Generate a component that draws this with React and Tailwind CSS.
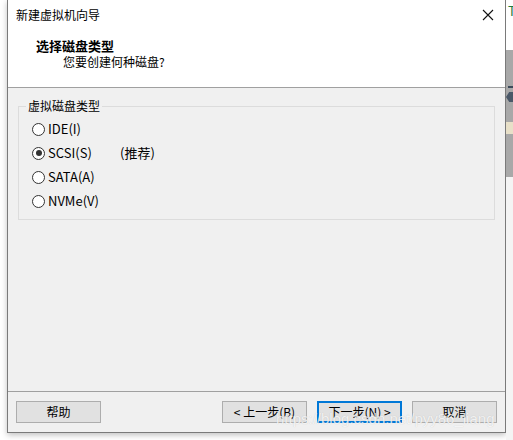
import React from 'react';

const font = { fontFamily: '"Noto Sans CJK SC", "Noto Sans", sans-serif' };

function Radio({ checked, label, extra }) {
  return (
    <div className="flex h-[24px] items-center">
      <span className="flex h-[13px] w-[13px] items-center justify-center rounded-full border border-[#333] bg-white">
        {checked && <span className="h-[6px] w-[6px] rounded-full bg-[#333]" />}
      </span>
      <span className="ml-[3px] w-[72px] text-[13px] text-black">{label}</span>
      {extra && <span className="text-[13px] text-black">{extra}</span>}
    </div>
  );
}

function Btn({ children, primary }) {
  return (
    <button
      className={
        'flex h-[22px] w-[85px] items-center justify-center bg-[#e1e1e1] text-[12px] text-black ' +
        (primary ? 'border-2 border-[#0078d7]' : 'border border-[#adadad]')
      }
    >
      {children}
    </button>
  );
}

export default function App() {
  return (
    <div className="relative flex h-[440px] w-[513px] overflow-hidden bg-white" style={font}>
      <div className="ml-[7px] flex h-[433px] w-[499px] flex-col border border-t-0 border-[#7a7a7a] bg-[#f0f0f0] shadow-[0_2px_6px_rgba(0,0,0,0.25)]">
        {/* header */}
        <div className="h-[88px] border-b border-[#a0a0a0] bg-white">
          <div className="flex h-[30px] items-center justify-between pl-[8px] pr-[8px]">
            <span className="text-[12px] text-black">新建虚拟机向导</span>
            <svg width="12" height="12" viewBox="0 0 12 12" className="mr-[3px]">
              <path d="M1 1L11 11M11 1L1 11" stroke="#111" strokeWidth="1.1" />
            </svg>
          </div>
          <div className="mt-[8px] pl-[28px] text-[13px] font-bold leading-[16px] text-black">选择磁盘类型</div>
          <div className="pl-[55px] text-[12px] leading-[16px] text-black">您要创建何种磁盘?</div>
        </div>

        {/* content */}
        <div className="flex-1 px-[10px] pt-[11px]">
          <fieldset className="h-[121px] border border-[#dcdcdc] pl-[13px] pt-[4px]">
            <legend className="-ml-[6px] px-[2px] text-[12px] leading-[14px] text-black">虚拟磁盘类型</legend>
            <Radio label="IDE(I)" />
            <Radio checked label="SCSI(S)" extra="(推荐)" />
            <Radio label="SATA(A)" />
            <Radio label="NVMe(V)" />
          </fieldset>
        </div>

        {/* footer */}
        <div className="h-[41px] border-t border-[#a0a0a0] px-[8px] pt-[9px]">
          <div className="flex items-center">
            <Btn>帮助</Btn>
            <div className="flex-1" />
            <div className="flex gap-[10px]">
              <Btn>&lt; 上一步(B)</Btn>
              <Btn primary>下一步(N) &gt;</Btn>
              <Btn>取消</Btn>
            </div>
          </div>
        </div>
      </div>

      {/* background window strip */}
      <div className="flex w-[7px] flex-col">
        <div className="h-[50px] bg-white pl-[2px] pt-[3px] text-[13px] leading-[16px] text-[#1e7a3c]">T</div>
        <div className="relative h-[127px] bg-[#a8a8a8]">
          <div className="ml-[2px] mt-[36px] h-[2px] w-[6px] bg-[#3c4a5a]" />
          <div className="ml-[0px] mt-[4px] h-[10px] w-[8px] bg-[#4a5868] [clip-path:polygon(40%_0,100%_0,100%_100%,40%_100%,0_50%)]" />
          <div className="mt-[20px] h-[12px] w-[7px] bg-[#e8e0c8]" />
        </div>
        <div className="flex-1 bg-[#f4f4f4]" />
      </div>

      {/* watermark */}
      <div className="absolute left-[276px] top-[408px] font-['Liberation_Sans',sans-serif] text-[15px] text-white/80 [text-shadow:0_0_1px_rgba(0,0,0,0.2)]">
        https://blog.csdn.net/pyy86_liang
      </div>
    </div>
  );
}
